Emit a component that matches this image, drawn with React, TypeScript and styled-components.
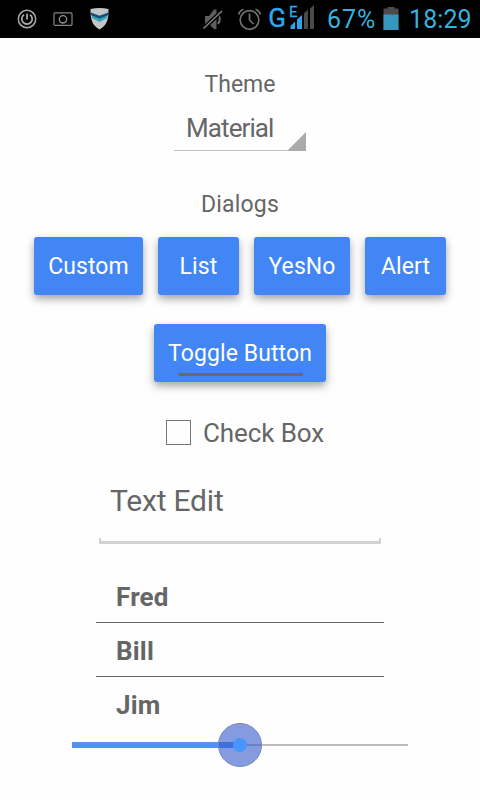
import React from "react";
import styled, { createGlobalStyle } from "styled-components";

const GlobalStyle = createGlobalStyle`
  * { box-sizing: border-box; }
  body { margin: 0; background: #fefefe; }
`;

const Screen = styled.div`
  width: 480px;
  height: 800px;
  overflow: hidden;
  display: flex;
  flex-direction: column;
  align-items: center;
  background: #fefefe;
  color: #666;
  font-family: Roboto, sans-serif;
`;

const StatusBar = styled.header`
  width: 100%;
  height: 38px;
  flex: none;
  display: flex;
  align-items: center;
  background: #000;
  color: #35b2de;
  svg { display: block; flex: none; }
`;

const Notifications = styled.div`
  display: flex;
  align-items: center;
  flex: 1;
  padding-left: 16px;
`;

const StatusText = styled.span<{ $width: number; $spacing: number }>`
  width: ${(p) => p.$width}px;
  flex: none;
  font-size: 25px;
  line-height: 38px;
  height: 38px;
  padding-top: 1px;
  letter-spacing: ${(p) => p.$spacing}px;
  white-space: nowrap;
`;

const Caption = styled.h2<{ $top: number; $spacing: number }>`
  margin: ${(p) => p.$top}px 0 0;
  font-size: 23px;
  font-weight: 400;
  line-height: 30px;
  letter-spacing: ${(p) => p.$spacing}px;
`;

const Spinner = styled.div`
  width: 132px;
  height: 38px;
  margin-top: 13px;
  padding-left: 12px;
  display: flex;
  justify-content: space-between;
  align-items: flex-end;
  border-bottom: 1px solid #c2c2c2;
  font-size: 26px;
  line-height: 44px;
  letter-spacing: -0.9px;
  svg { display: block; margin-bottom: -1px; }
`;

const ButtonRow = styled.div<{ $top: number }>`
  display: flex;
  gap: 15px;
  margin-top: ${(p) => p.$top}px;
`;

const Button = styled.button<{ $width: number }>`
  width: ${(p) => p.$width}px;
  height: 58px;
  padding: 0;
  border: 0;
  border-radius: 3px;
  background: #4286f5;
  color: #fff;
  font: 400 23px/60px Roboto, sans-serif;
  letter-spacing: 0.1px;
  white-space: nowrap;
  box-shadow: 0 4px 8px rgba(0, 0, 0, 0.36);
`;

const ToggleButton = styled(Button)`
  display: flex;
  flex-direction: column;
  align-items: center;
`;

const ToggleIndicator = styled.i`
  width: 125px;
  height: 3px;
  margin-top: -11px;
  border-radius: 1px;
  background: #666a72;
`;

const CheckRow = styled.label`
  display: flex;
  align-items: center;
  gap: 12px;
  height: 30px;
  margin: 36px 0 0 10px;
  font-size: 26px;
  line-height: 30px;
  letter-spacing: -0.1px;
`;

const Box = styled.span`
  width: 25px;
  height: 25px;
  margin-top: -2px;
  border: 1px solid #777;
`;

const Field = styled.div`
  width: 282px;
  height: 66px;
  margin-top: 30px;
  display: flex;
  flex-direction: column;
  justify-content: space-between;
`;

const FieldText = styled.span`
  padding-left: 11px;
  font-size: 30px;
  line-height: 46px;
  letter-spacing: -0.2px;
`;

const FieldLine = styled.span`
  height: 6px;
  border: 2px solid #d2d2d2;
  border-width: 0 2px 3px;
`;

const List = styled.ul`
  width: 288px;
  margin: 25px 0 0;
  padding: 0;
  list-style: none;
`;

const Item = styled.li`
  height: 54px;
  padding-left: 20px;
  font-size: 26px;
  font-weight: 700;
  line-height: 56px;
  letter-spacing: 0.2px;
  border-bottom: 1px solid #666;
  &:last-child { border: 0; }
`;

const Slider = styled.svg`
  display: block;
  flex: none;
  margin-top: -10px;
`;

const dialogs = [
  { label: "Custom", width: 109 },
  { label: "List", width: 81 },
  { label: "YesNo", width: 96 },
  { label: "Alert", width: 81 },
];

const StatusIcons = () => (
  <svg width="104" height="38" viewBox="0 0 104 38" fill="none" stroke="#aaa">
    <circle cx="11" cy="19" r="8.7" strokeWidth="1.5" />
    <path d="M8 14.7a5.2 5.2 0 1 0 6 0M11 13.5v6" strokeWidth="1.7" />
    <rect x="38" y="12.8" width="18" height="12.6" rx="1.2" stroke="#858585" strokeWidth="1.2" />
    <circle cx="47" cy="19.3" r="3.7" stroke="#909090" strokeWidth="1.3" />
    <path d="M74.500 9Q83.500 7 92.500 9C92.500 19 91.500 25 83.500 29.500C75.500 25 74.500 19 74.500 9Z" fill="#c4c5c6" stroke="none" />
    <path d="M74.700 12.500l8.800 3.200 8.800-3.200-.2 2.500-8.600 5-8.600-5Z" fill="#164a78" stroke="none" />
    <path d="M75.500 15.500l8 3 8-3-.7 2.500-7.300 4-7.300-4Z" fill="#2ba5b8" stroke="none" />
  </svg>
);

const SystemIcons = () => (
  <svg width="66" height="38" viewBox="200 0 66 38" fill="none" stroke="#707070">
    <path d="M205 16h4l5-6.500h2.500v19.500H214l-5-5h-4Z" fill="#5e5e5e" stroke="none" />
    <path d="M218 14q3.500 5 0 10" strokeWidth="2" />
    <path d="M203 29L222 11" stroke="#000" strokeWidth="4" />
    <path d="M203.500 28.500L222 11" stroke="#858585" strokeWidth="1.500" />
    <circle cx="249.500" cy="20" r="9.300" strokeWidth="1.700" />
    <path d="M249.500 13.500V20l4 4M238.500 14.500q1.200-4 5-5.300M255.500 9.200q3.800 1.300 5 5.300" strokeWidth="1.700" />
  </svg>
);

const NetworkIcon = () => (
  <svg width="61" height="38" viewBox="266 0 61 38">
    <text x="268.300" y="27" fontSize="26" fill="#2aa9ee" stroke="#2aa9ee" strokeWidth=".4">G</text>
    <text x="289" y="17" fontSize="15" fill="#2aa9ee" stroke="#2aa9ee" strokeWidth=".3">E</text>
    <path d="M290.500 29v-3l4.500-4.500V29ZM297 29V19.500l5-4.500v14Z" fill="#29a5ee" />
    <path d="M304 29V13.200l4-3.700V29ZM310 29V8.500l4-3.500v24Z" fill="#4a4a4a" />
  </svg>
);

const BatteryIcon = () => (
  <svg width="26" height="38" viewBox="383 0 26 38">
    <path d="M383.500 8.500h4V7h7v1.500h4V30h-15Z" fill="#4b4b4b" />
    <path d="M383.500 14.500h15V30h-15Z" fill="#3597bb" />
  </svg>
);

export default function App() {
  return (
    <Screen>
      <GlobalStyle />
      <StatusBar>
        <Notifications><StatusIcons /></Notifications>
        <SystemIcons />
        <NetworkIcon />
        <StatusText $width={56} $spacing={1}>67%</StatusText>
        <BatteryIcon />
        <StatusText $width={71} $spacing={0.1}>18:29</StatusText>
      </StatusBar>
      <Caption $top={32} $spacing={0}>Theme</Caption>
      <Spinner>
        <span>Material</span>
        <svg width="19" height="19" viewBox="0 0 19 19"><path d="M19 0V19H0Z" fill="#aaa" /></svg>
      </Spinner>
      <Caption $top={39} $spacing={0.2}>Dialogs</Caption>
      <ButtonRow $top={17}>
        {dialogs.map((d) => <Button key={d.label} $width={d.width}>{d.label}</Button>)}
      </ButtonRow>
      <ButtonRow $top={29}>
        <ToggleButton $width={172}>Toggle Button<ToggleIndicator /></ToggleButton>
      </ButtonRow>
      <CheckRow><Box /><span>Check Box</span></CheckRow>
      <Field><FieldText>Text Edit</FieldText><FieldLine /></Field>
      <List>
        <Item>Fred</Item>
        <Item>Bill</Item>
        <Item>Jim</Item>
      </List>
      <Slider width="336" height="48" viewBox="72 721 336 48">
        <path d="M240 745H408" stroke="#bdbdbd" strokeWidth="2" />
        <path d="M72 745H240" stroke="#4f93f5" strokeWidth="6" />
        <circle cx="240" cy="745" r="21.500" fill="#3359cc" fillOpacity=".6" stroke="#7884c4" />
        <circle cx="240" cy="745" r="7" fill="#4596ff" />
      </Slider>
    </Screen>
  );
}
